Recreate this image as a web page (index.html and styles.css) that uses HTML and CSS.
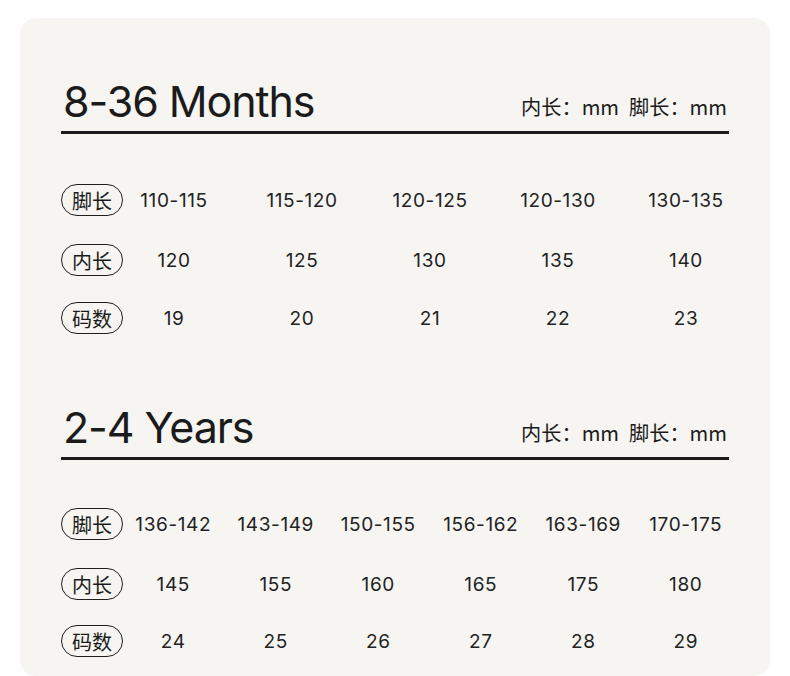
FILE: index.html
```html
<!DOCTYPE html>
<html lang="zh">
<head>
<meta charset="utf-8">
<link rel="stylesheet" href="styles.css">
</head>
<body>
<div class="card">
  <section class="section s1">
    <div class="head">
      <h2 class="title">8-36 Months</h2>
      <div class="unit"><span>内长：mm</span><span>脚长：mm</span></div>
    </div>
    <div class="row r1">
      <span class="pill">脚长</span>
      <div class="vals five"><span>110-115</span><span>115-120</span><span>120-125</span><span>120-130</span><span>130-135</span></div>
    </div>
    <div class="row r2">
      <span class="pill">内长</span>
      <div class="vals five"><span>120</span><span>125</span><span>130</span><span>135</span><span>140</span></div>
    </div>
    <div class="row r3">
      <span class="pill">码数</span>
      <div class="vals five"><span>19</span><span>20</span><span>21</span><span>22</span><span>23</span></div>
    </div>
  </section>
  <section class="section s2">
    <div class="head">
      <h2 class="title">2-4 Years</h2>
      <div class="unit"><span>内长：mm</span><span>脚长：mm</span></div>
    </div>
    <div class="row r1">
      <span class="pill">脚长</span>
      <div class="vals six"><span>136-142</span><span>143-149</span><span>150-155</span><span>156-162</span><span>163-169</span><span>170-175</span></div>
    </div>
    <div class="row r2">
      <span class="pill">内长</span>
      <div class="vals six"><span>145</span><span>155</span><span>160</span><span>165</span><span>175</span><span>180</span></div>
    </div>
    <div class="row r3">
      <span class="pill">码数</span>
      <div class="vals six"><span>24</span><span>25</span><span>26</span><span>27</span><span>28</span><span>29</span></div>
    </div>
  </section>
</div>
</body>
</html>
```
FILE: styles.css
```css
* { box-sizing: border-box; }
html, body { margin: 0; padding: 0; background: #ffffff; }
body {
  font-family: Inter, "Noto Sans CJK SC", sans-serif;
  color: #1b1b1b;
  overflow: hidden;
}
.card {
  margin: 18px 0 0 20px;
  width: 750px;
  height: 658px;
  background: #f6f5f2;
  border-radius: 16px;
  padding: 0 41px;
}
.head {
  display: flex;
  justify-content: space-between;
  align-items: baseline;
  border-bottom: 3px solid #1c1c1c;
  height: 116px;
  padding-top: 58px;
}
.s2 .head { height: 126px; padding-top: 68px; }
.title {
  margin: 0 0 0 2px;
  font-weight: 400;
  font-size: 43px;
  line-height: 50px;
  letter-spacing: -1.1px;
}
.unit {
  display: flex;
  gap: 10px;
  font-size: 20.2px;
  font-family: "Noto Sans CJK SC", sans-serif;
  margin-right: 2px;
  transform: translateY(-2px);
}
.unit span { white-space: nowrap; }
.row {
  display: flex;
  align-items: center;
  height: 32px;
}
.r1 { margin-top: 50px; }
.r2 { margin-top: 28px; }
.r3 { margin-top: 26px; }
.s2 .r1 { margin-top: 48px; }
.s2 .r3 { margin-top: 25px; }
.pill {
  flex: none;
  width: 62px;
  height: 32px;
  border: 1.7px solid #1e1e1e;
  border-radius: 16px;
  display: flex;
  align-items: center;
  justify-content: center;
  font-size: 20px;
  font-family: "Noto Sans CJK SC", sans-serif;
  color: #1b1b1b;
}
.vals {
  flex: none;
  display: grid;
  font-size: 19px;
  letter-spacing: 0.6px;
  color: #222;
}
.vals span { text-align: center; }
.five {
  grid-template-columns: repeat(5, 104px);
  column-gap: 24px;
  margin-left: -1px;
}
.six {
  grid-template-columns: repeat(6, 1fr);
  width: 615px;
  margin-left: -1px;
}
```
